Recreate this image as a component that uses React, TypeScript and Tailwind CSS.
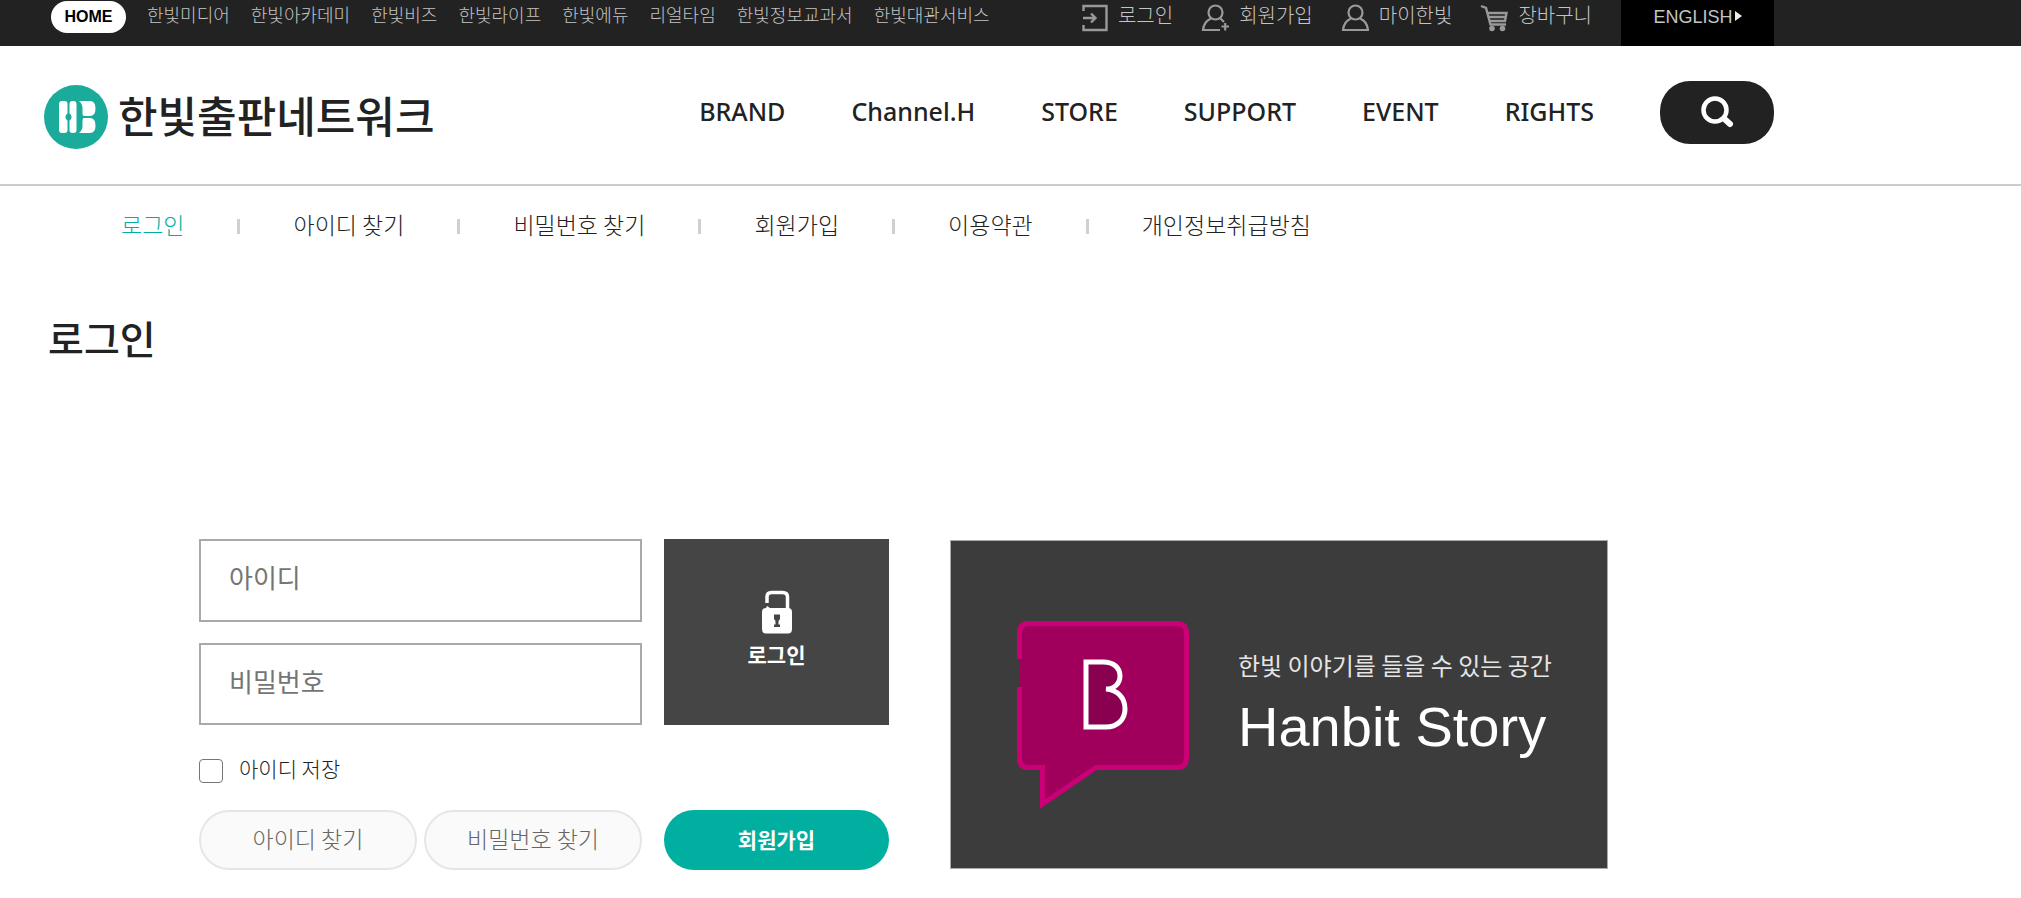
import React from 'react';

const familySites = [
  '한빛미디어',
  '한빛아카데미',
  '한빛비즈',
  '한빛라이프',
  '한빛에듀',
  '리얼타임',
  '한빛정보교과서',
  '한빛대관서비스',
];

const mainMenu = ['BRAND', 'Channel.H', 'STORE', 'SUPPORT', 'EVENT', 'RIGHTS'];

const subMenu = ['로그인', '아이디 찾기', '비밀번호 찾기', '회원가입', '이용약관', '개인정보취급방침'];

function LoginIcon() {
  return (
    <svg width="26" height="28" viewBox="0 0 26 28" fill="none" stroke="#999" strokeWidth="2.400" aria-hidden="true">
      <path d="M1.500 7V2H24.500V26H1.500V21" />
      <path d="M1 14H13M9 9.500L13.500 14L9 18.500" />
    </svg>
  );
}

function JoinIcon() {
  return (
    <svg width="28" height="28" viewBox="0 0 28 28" fill="none" stroke="#999" strokeWidth="2.200" aria-hidden="true">
      <ellipse cx="14.500" cy="8.500" rx="7" ry="7" />
      <path d="M10 14.500C5 16.500 2.500 21 2 26H19M19.500 14.500L23 18" />
      <path d="M20.500 22.500H28M24.200 19V26.500" />
    </svg>
  );
}

function MyIcon() {
  return (
    <svg width="28" height="28" viewBox="0 0 28 28" fill="none" stroke="#999" strokeWidth="2.200" aria-hidden="true">
      <ellipse cx="14.500" cy="8.500" rx="7" ry="7" />
      <path d="M10 14.500C5 16.500 2.500 21 2 26H27C26.500 21 24 16.500 19 14.500" />
    </svg>
  );
}

function CartIcon() {
  return (
    <svg width="28" height="28" viewBox="0 0 28 28" fill="none" stroke="#999" strokeWidth="2.400" aria-hidden="true">
      <path d="M1 2L6 4L10.500 20.500H26" />
      <path d="M8 9H26.500L25 17H10M9 13H25.500" />
      <circle cx="12" cy="24.500" r="1.600" fill="#999" />
      <circle cx="22.500" cy="24.500" r="1.600" fill="#999" />
    </svg>
  );
}

const userMenu = [
  { label: '로그인', Icon: LoginIcon },
  { label: '회원가입', Icon: JoinIcon },
  { label: '마이한빛', Icon: MyIcon },
  { label: '장바구니', Icon: CartIcon },
];

function LogoMark() {
  return (
    <svg width="64" height="64" viewBox="0 0 64 64" aria-hidden="true">
      <circle cx="32" cy="32" r="32" fill="#1aab9b" />
      <g fill="#fff">
        <path d="M15 19Q15 16 18 16H20.500Q23.500 16 23.500 19V28.500A4 4 0 0 0 23.500 35.500V45Q23.500 48 20.500 48H18Q15 48 15 45Z" />
        <path d="M25.500 19Q25.500 16 28.500 16H29.500Q32.500 16 32.500 19V45Q32.500 48 29.500 48H28.500Q25.500 48 25.500 45V35.500A4 4 0 0 0 25.500 28.500Z" />
        <path d="M35 16H46Q51.500 16 51.500 23.500T46 31H40Q38.500 31 38.500 28V23Q38.500 19 35 16Z" />
        <path d="M35 48H46Q51.500 48 51.500 40.500T46 33H40Q38.500 33 38.500 36V41Q38.500 45 35 48Z" />
      </g>
    </svg>
  );
}

function SearchIcon() {
  return (
    <svg width="34" height="34" viewBox="0 0 34 34" fill="none" stroke="#fff" aria-hidden="true">
      <circle cx="15" cy="15" r="11.500" strokeWidth="4.500" />
      <path d="M24.500 24L30 29" strokeWidth="6" strokeLinecap="round" />
    </svg>
  );
}

function LockIcon() {
  return (
    <svg width="32" height="44" viewBox="0 0 32 44" aria-hidden="true">
      <path d="M6 13V7Q6 2.500 10.500 2.500H21.500Q26.500 2.500 26.500 7V20" fill="none" stroke="#fff" strokeWidth="3.500" />
      <path d="M5 18Q1 18 1 22V39Q1 43.500 5 43.500H27Q31 43.500 31 39V22Q31 18 27 18H9L6 16Z" fill="#fff" />
      <path d="M13 24.500H19V29L17.500 31V34.500H19V37H13V34.500H14.500V31L13 29Z" fill="#454545" />
    </svg>
  );
}

function StoryBubble() {
  return (
    <svg className="shrink-0" width="174" height="190" viewBox="0 0 174 190" aria-hidden="true">
      <path
        d="M3.500 40V14Q3.500 3.500 12 3.500H161Q170.500 3.500 170.500 14V138Q170.500 147.500 161 147.500H80L26.500 184V147.500H12Q3.500 147.500 3.500 138Z"
        fill="#a0005c"
      />
      <path
        d="M3.500 39V14Q3.500 3.500 12 3.500H161Q170.500 3.500 170.500 14V138Q170.500 147.500 161 147.500H80L26.500 184V147.500H12Q3.500 147.500 3.500 138V67"
        fill="none"
        stroke="#cb0077"
        strokeWidth="5"
      />
      <path
        d="M70 42H87C98 42 104 48 104 56C104 64 98 69 90 69C102 70 109 78 109 89C109 100 101 107 90 107H70Z"
        fill="#8a0050"
        stroke="#fff"
        strokeWidth="5"
      />
    </svg>
  );
}

export default function App() {
  return (
    <div className="min-h-screen overflow-x-clip bg-white font-['Noto_Sans_CJK_KR','Noto_Sans',sans-serif] text-[#222]">
      <div className="bg-[#222]">
        <div className="flex h-[46px] max-w-[1774px] items-start justify-between pl-[51px] text-[#c4c4c4]">
          <nav aria-label="패밀리 사이트" className="flex gap-[21px] pt-px">
            <a
              href="#home"
              className="flex h-8 w-[75px] items-center justify-center rounded-2xl bg-white font-['Liberation_Sans',sans-serif] text-base font-bold text-black"
            >
              HOME
            </a>
            {familySites.map((site) => (
              <a key={site} href="#site" className="text-lg leading-[27px] font-light whitespace-nowrap">
                {site}
              </a>
            ))}
          </nav>
          <div className="flex">
            <nav aria-label="회원 메뉴" className="flex gap-7 pr-[29px]">
              {userMenu.map(({ label, Icon }) => (
                <a key={label} href="#user" className="flex items-start gap-[10px] text-xl font-light whitespace-nowrap">
                  <span className="pt-1">
                    <Icon />
                  </span>
                  <span className="leading-[29px]">{label}</span>
                </a>
              ))}
            </nav>
            <a
              href="#english"
              className="flex h-[46px] w-[153px] items-start justify-center gap-0.5 bg-black font-['Liberation_Sans',sans-serif] text-lg leading-[34px]"
            >
              ENGLISH
              <svg className="mt-[11px]" width="7" height="10" viewBox="0 0 7 10" aria-hidden="true">
                <path d="M0 0L7 5L0 10Z" fill="#eee" />
              </svg>
            </a>
          </div>
        </div>
      </div>

      <header className="border-b-2 border-[#ccc]">
        <div className="flex h-[138px] max-w-[1774px] items-center justify-between pl-11">
          <a href="#main" className="flex items-center gap-[10px] pt-1">
            <LogoMark />
            <span className="pb-1.5 text-[43px] leading-[60px] font-medium whitespace-nowrap">한빛출판네트워크</span>
          </a>
          <div className="flex items-center gap-[66px] pb-1.5">
            <nav
              aria-label="주 메뉴"
              className="flex gap-[66px] pb-0.5 font-['Noto_Sans',sans-serif] text-[25px] leading-8 font-medium"
            >
              {mainMenu.map((item) => (
                <a key={item} href="#menu">
                  {item}
                </a>
              ))}
            </nav>
            <button
              type="button"
              aria-label="검색"
              className="flex h-[63px] w-[114px] items-center justify-center rounded-[30px] bg-[#222]"
            >
              <SearchIcon />
            </button>
          </div>
        </div>
      </header>

      <nav aria-label="회원 서비스" className="pt-[22px] pl-[121px]">
        <ul className="flex items-center gap-[53px] text-[23px] leading-8 font-light whitespace-nowrap">
          {subMenu.map((item, index) => (
            <React.Fragment key={item}>
              {index > 0 && <li aria-hidden="true" className="mt-1 h-[15px] w-[3px] bg-[#d0d0d0]" />}
              <li>
                <a href="#member" className={index === 0 ? 'text-[#00afa0]' : ''}>
                  {item}
                </a>
              </li>
            </React.Fragment>
          ))}
        </ul>
      </nav>

      <main className="max-w-[1774px]">
        <h1 className="pt-[69px] pl-12 text-[39px] leading-[56px] font-medium">로그인</h1>

        <div className="grid grid-cols-[690fr_658fr] gap-[61px] pt-[174px] pr-[166px] pb-7 pl-[199px]">
          <form className="grid grid-cols-[443fr_225fr] gap-x-[22px]" onSubmit={(e) => e.preventDefault()}>
            <div className="flex flex-col gap-[21px]">
              <input
                type="text"
                aria-label="아이디"
                placeholder="아이디"
                className="h-[83px] w-full border-2 border-[#a9a9a9] px-7 pb-2 text-[26px] placeholder:text-[#757575]"
              />
              <input
                type="password"
                aria-label="비밀번호"
                placeholder="비밀번호"
                className="h-[82px] w-full border-2 border-[#a9a9a9] px-7 pb-2 text-[26px] placeholder:text-[#757575]"
              />
            </div>
            <button
              type="submit"
              className="flex flex-col items-center justify-center gap-1 bg-[#454545] pb-1 text-[21px] leading-8 font-bold text-white"
            >
              <LockIcon />
              로그인
            </button>

            <div className="col-span-2 flex h-[85px] items-center gap-4 pt-5 pb-[13px]">
              <input
                id="save-id"
                type="checkbox"
                className="size-6 appearance-none rounded border border-[#767676] bg-white checked:bg-[#00afa0]"
              />
              <label htmlFor="save-id" className="pb-1.5 text-[21px] leading-8 font-light">
                아이디 저장
              </label>
            </div>

            <div className="grid grid-cols-2 gap-[7px] text-[23px] font-light text-[#666]">
              <button type="button" className="h-[60px] rounded-full border-2 border-[#e6e6e6] bg-[#fafafa] pb-1">
                아이디 찾기
              </button>
              <button type="button" className="h-[60px] rounded-full border-2 border-[#e6e6e6] bg-[#fafafa] pb-1">
                비밀번호 찾기
              </button>
            </div>
            <button type="button" className="h-[60px] rounded-full bg-[#00afa0] text-[21px] font-bold text-white">
              회원가입
            </button>
          </form>

          <a
            href="#story"
            className="my-px flex items-center gap-12 border border-[#aaa] bg-[#3c3c3c] pt-5 pl-[65px] whitespace-nowrap"
          >
            <StoryBubble />
            <span className="flex flex-col gap-2 pb-5">
              <span className="text-2xl leading-9 text-[#e5e5e5]">한빛 이야기를 들을 수 있는 공간</span>
              <span className="font-['Liberation_Sans',sans-serif] text-[56px] leading-[72px] text-white">
                Hanbit Story
              </span>
            </span>
          </a>
        </div>
      </main>
    </div>
  );
}
